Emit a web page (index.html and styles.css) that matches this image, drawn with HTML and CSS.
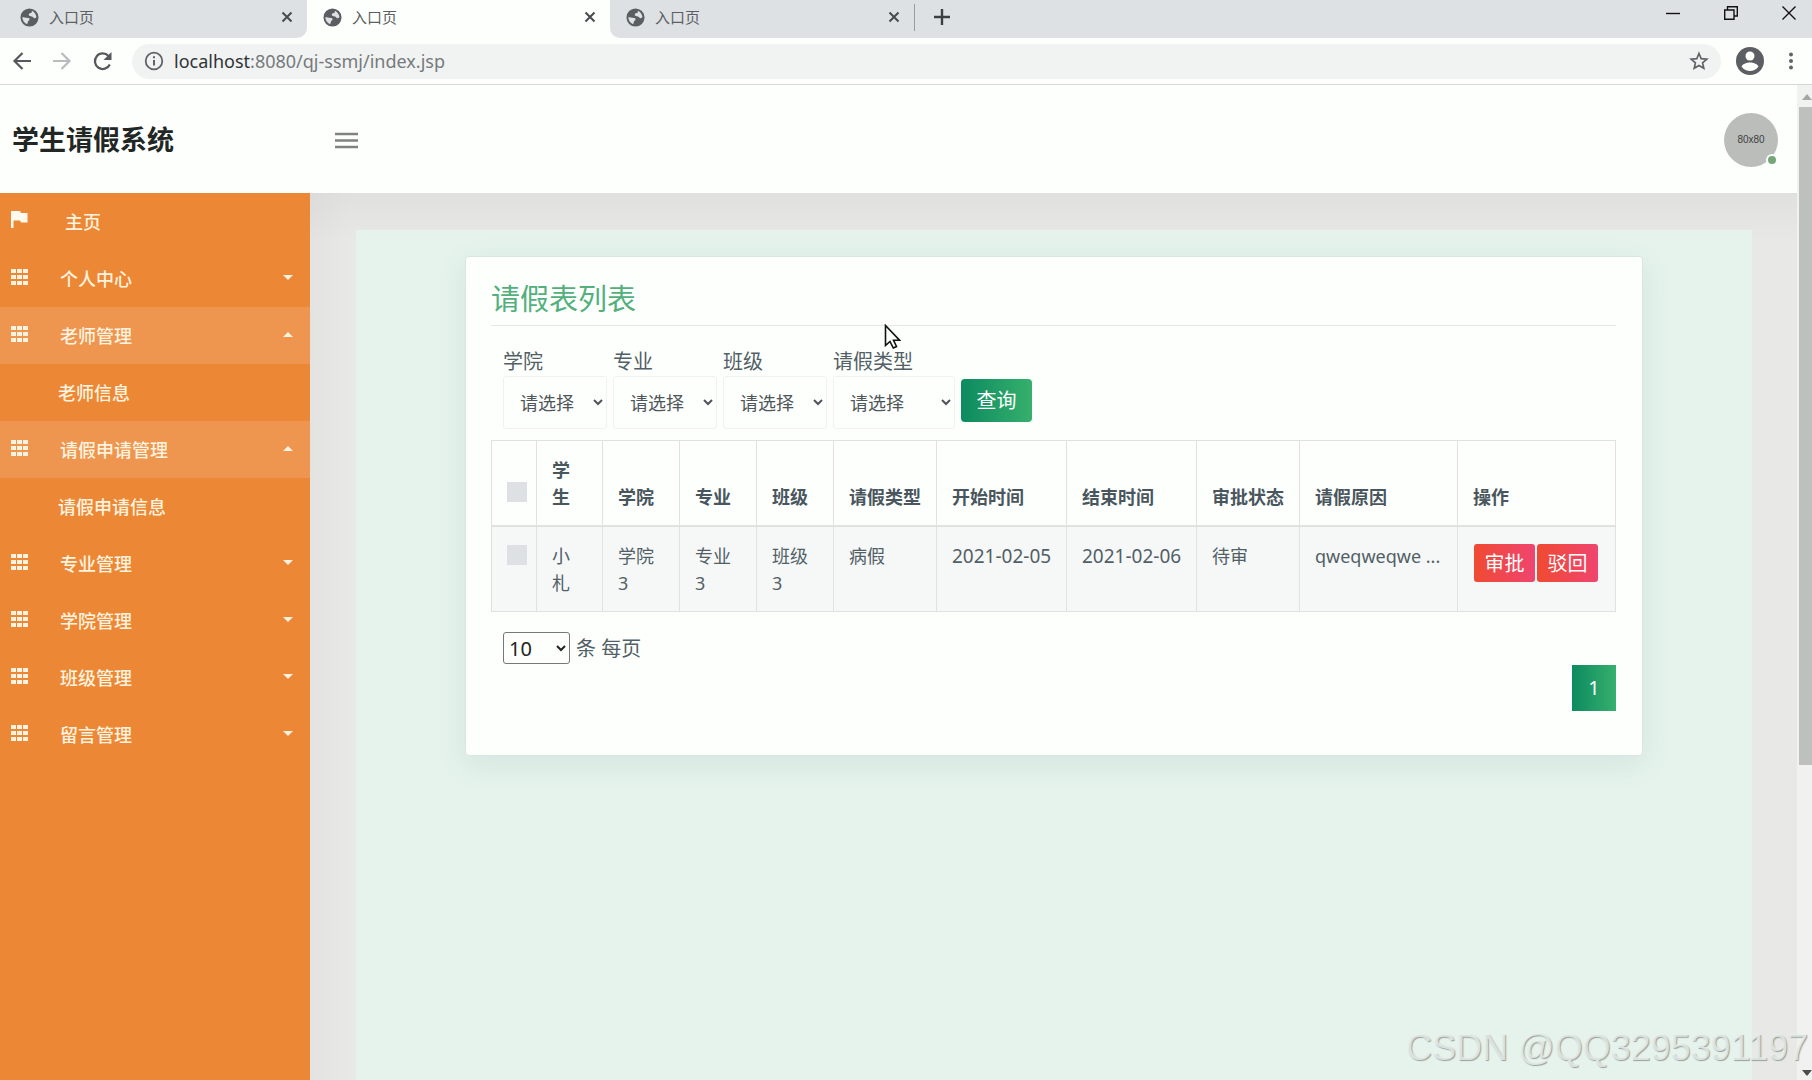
FILE: index.html
```html
<!DOCTYPE html>
<html lang="zh-CN">
<head>
<meta charset="utf-8">
<title>入口页</title>
<link rel="stylesheet" href="styles.css">
</head>
<body>
<svg class="defs" aria-hidden="true">
  <symbol id="globe" viewBox="0 0 20 20"><circle cx="10" cy="10" r="9.500" fill="#5a5e62"/><path d="M2.500 9.500C4 9.500 5.500 10.500 8.500 10.500 10.500 10.500 10.500 12.500 9 13.500 8 14.200 8.500 15.500 7.500 17 4.500 16 2.500 13 2.500 9.500zM12.500 2.800C15 4 17 6.500 17.300 9.500 16 11.500 14.500 11 13.500 9.500 12.500 8.500 10.500 9 9.500 8 8.500 6.500 10 5.500 11.500 5.300 12.500 5 12.500 4 12.500 2.800z" fill="#dee1e4"/></symbol>
  <symbol id="cross" viewBox="0 0 12 12"><path d="M1.500 1.500l9 9M10.500 1.500l-9 9" stroke="#474b4f" stroke-width="2"/></symbol>
  <symbol id="grid" viewBox="0 0 17 16"><path d="M0 0h5v4H0zM6 0h5v4H6zM12 0h5v4h-5zM0 6h5v4H0zM6 6h5v4H6zM12 6h5v4h-5zM0 12h5v4H0zM6 12h5v4H6zM12 12h5v4h-5z" fill="#fff3df"/></symbol>
  <symbol id="down" viewBox="0 0 10 5"><path d="M0 0h10L5 5z" fill="#fff3df"/></symbol>
  <symbol id="up" viewBox="0 0 10 5"><path d="M0 5h10L5 0z" fill="#fff3df"/></symbol>
</svg>

<div class="tabs">
  <div class="tab"><svg class="favicon"><use href="#globe"/></svg><span class="tab-name">入口页</span><button class="tab-close" aria-label="关闭"><svg width="12" height="12"><use href="#cross"/></svg></button></div>
  <div class="tab tab-active"><svg class="favicon"><use href="#globe"/></svg><span class="tab-name">入口页</span><button class="tab-close" aria-label="关闭"><svg width="12" height="12"><use href="#cross"/></svg></button></div>
  <div class="tab tab-last"><svg class="favicon"><use href="#globe"/></svg><span class="tab-name">入口页</span><button class="tab-close" aria-label="关闭"><svg width="12" height="12"><use href="#cross"/></svg></button></div>
  <button class="new-tab" aria-label="新标签页"><svg width="16" height="16" viewBox="0 0 16 16"><path d="M8 0v16M0 8h16" stroke="#3c4043" stroke-width="2.400"/></svg></button>
  <div class="window-buttons">
    <button aria-label="最小化"><svg width="14" height="14" viewBox="0 0 14 14"><path d="M0 7.500h14" stroke="#111" stroke-width="1.400"/></svg></button>
    <button aria-label="还原"><svg width="14" height="14" viewBox="0 0 14 14"><path d="M.7 4h9.300v9.300H.7zM3.500 4V.7h9.800V10H10" fill="none" stroke="#111" stroke-width="1.400"/></svg></button>
    <button aria-label="关闭窗口"><svg width="14" height="14" viewBox="0 0 14 14"><path d="M.5.500l13 13M13.500.500l-13 13" stroke="#111" stroke-width="1.400"/></svg></button>
  </div>
</div>

<div class="toolbar">
  <button aria-label="后退"><svg width="20" height="20" viewBox="0 0 20 20"><path d="M19 10H3M10.500 2L2.500 10l8 8" fill="none" stroke="#55595d" stroke-width="2.200"/></svg></button>
  <button aria-label="前进"><svg width="20" height="20" viewBox="0 0 20 20"><path d="M1 10h16M9.500 2l8 8-8 8" fill="none" stroke="#b9bcbe" stroke-width="2.200"/></svg></button>
  <button aria-label="刷新"><svg width="20" height="20" viewBox="0 0 20 20"><path d="M17.800 13.500A7.800 7.800 0 1 1 16.500 5" fill="none" stroke="#55595d" stroke-width="2.300"/><path d="M19.500 1v8H11.500z" fill="#55595d"/></svg></button>
  <div class="address">
    <svg width="20" height="20" viewBox="0 0 20 20"><circle cx="10" cy="10" r="8.300" fill="none" stroke="#5f6368" stroke-width="1.800"/><path d="M10 9v5.500M10 5.200v2" stroke="#5f6368" stroke-width="2"/></svg>
    <span class="url"><span class="host">localhost</span>:8080/qj-ssmj/index.jsp</span>
    <svg width="20" height="20" viewBox="0 0 24 24"><path d="M12 3l2.600 6.200 6.800.6-5.100 4.400 1.500 6.600-5.800-3.500-5.800 3.500 1.500-6.600L2.600 9.800l6.800-.6z" fill="none" stroke="#5f6368" stroke-width="2"/></svg>
  </div>
  <button class="profile" aria-label="用户"><svg width="28" height="28" viewBox="0 0 28 28"><circle cx="14" cy="14" r="14" fill="#5b5f63"/><circle cx="14" cy="9" r="4.500" fill="#fdfffd"/><path d="M5.500 19.500C7 16.500 11 15.500 14 15.500s7 1 8.500 4C20 23 17 24 14 24s-6-1-8.500-4.500z" fill="#fdfffd"/></svg></button>
  <button class="menu-button" aria-label="菜单"><svg width="6" height="20" viewBox="0 0 6 20"><circle cx="3" cy="3.500" r="2" fill="#5f6368"/><circle cx="3" cy="10" r="2" fill="#5f6368"/><circle cx="3" cy="16.500" r="2" fill="#5f6368"/></svg></button>
</div>

<div class="viewport">
  <div class="page">
    <header class="header">
      <h1 class="brand">学生请假系统</h1>
      <button class="toggle" aria-label="展开菜单"><svg width="23" height="17" viewBox="0 0 23 17"><path d="M0 2h23M0 8.500h23M0 15h23" stroke="#80827f" stroke-width="2.400"/></svg></button>
      <a class="avatar" href="#">80x80<span class="online"></span></a>
    </header>
    <div class="body">
      <nav class="sidebar">
        <a class="item home" href="#"><svg width="17" height="17" viewBox="0 0 17 17"><path d="M0 0h9l1 2h6.500v9.500H10l-1-2H2.500V17H0z" fill="#fff9ee"/></svg><span>主页</span></a>
        <a class="item" href="#"><svg width="17" height="16"><use href="#grid"/></svg><span>个人中心</span><svg class="caret"><use href="#down"/></svg></a>
        <a class="item open" href="#"><svg width="17" height="16"><use href="#grid"/></svg><span>老师管理</span><svg class="caret"><use href="#up"/></svg></a>
        <a class="item sub" href="#">老师信息</a>
        <a class="item open" href="#"><svg width="17" height="16"><use href="#grid"/></svg><span>请假申请管理</span><svg class="caret"><use href="#up"/></svg></a>
        <a class="item sub" href="#">请假申请信息</a>
        <a class="item" href="#"><svg width="17" height="16"><use href="#grid"/></svg><span>专业管理</span><svg class="caret"><use href="#down"/></svg></a>
        <a class="item" href="#"><svg width="17" height="16"><use href="#grid"/></svg><span>学院管理</span><svg class="caret"><use href="#down"/></svg></a>
        <a class="item" href="#"><svg width="17" height="16"><use href="#grid"/></svg><span>班级管理</span><svg class="caret"><use href="#down"/></svg></a>
        <a class="item" href="#"><svg width="17" height="16"><use href="#grid"/></svg><span>留言管理</span><svg class="caret"><use href="#down"/></svg></a>
      </nav>
      <main class="main">
        <div class="panel">
          <section class="card">
            <h2 class="title">请假表列表</h2>
            <form class="filters">
              <label class="field">学院<select><option>请选择</option></select></label>
              <label class="field">专业<select><option>请选择</option></select></label>
              <label class="field">班级<select><option>请选择</option></select></label>
              <label class="field field-wide">请假类型<select><option>请选择</option></select></label>
              <button class="search" type="button">查询</button>
            </form>
            <table class="list">
              <colgroup><col class="c-check"><col class="c-student"><col class="c-short"><col class="c-short"><col class="c-short"><col class="c-type"><col class="c-date"><col class="c-date"><col class="c-type"><col class="c-long"><col class="c-long"></colgroup>
              <thead>
                <tr><th><input type="checkbox" aria-label="全选"></th><th class="student">学生</th><th>学院</th><th>专业</th><th>班级</th><th>请假类型</th><th>开始时间</th><th>结束时间</th><th>审批状态</th><th>请假原因</th><th>操作</th></tr>
              </thead>
              <tbody>
                <tr><td><input type="checkbox" aria-label="选择小札"></td><td class="student">小札</td><td>学院 3</td><td>专业 3</td><td>班级 3</td><td>病假</td><td class="date">2021-02-05</td><td class="date">2021-02-06</td><td>待审</td><td class="reason">qweqweqwe ...</td><td><div class="actions"><button type="button">审批</button><button type="button">驳回</button></div></td></tr>
              </tbody>
            </table>
            <label class="page-size"><select><option>10</option></select> 条 每页</label>
            <div class="pager"><a href="#">1</a></div>
          </section>
        </div>
      </main>
    </div>
  </div>
  <div class="scrollbar">
    <svg width="10" height="6" viewBox="0 0 10 6"><path d="M0 6h10L5 0z" fill="#a5a7a5"/></svg>
    <div class="thumb"></div>
    <svg class="scroll-down" width="10" height="6" viewBox="0 0 10 6"><path d="M0 0h10L5 6z" fill="#4a4d4a"/></svg>
  </div>
</div>

<svg class="pointer" width="17" height="25" viewBox="0 0 17 25"><path d="M1.500 1.500v20l4.500-4 3.300 6.500 3.200-1.500-3-6.300h6z" fill="#fff" stroke="#111" stroke-width="1.600"/></svg>
<div class="watermark">CSDN @QQ3295391197</div>
</body>
</html>
```
FILE: styles.css
```css
* { box-sizing: border-box; }

body {
  margin: 0;
  min-height: 100vh;
  display: flex;
  flex-direction: column;
  position: relative;
  overflow-x: hidden;
  background: #fdfffd;
  color: #525f66;
  font: 18px/27px "Noto Sans", "Noto Sans CJK SC", sans-serif;
}

button, select, input { font: inherit; margin: 0; }
button { border: 0; padding: 0; background: none; color: inherit; }
a { color: inherit; text-decoration: none; }
svg { display: block; flex: none; }
.defs { position: absolute; width: 0; height: 0; }

/* browser tabs */
.tabs { display: flex; height: 38px; background: #fdfffd; }
.tab {
  display: flex;
  align-items: center;
  width: 303px;
  padding: 0 14px 4px 20px;
  background: #dee1e4;
}
.tab:first-child { width: 307px; border-bottom-right-radius: 10px; }
.tab-active { background: #fdfffd; padding-left: 16px; }
.tab-last { width: 304px; padding-left: 16px; border-bottom-left-radius: 10px; }
.favicon { width: 19px; height: 19px; }
.tab-name { flex: 1; margin-left: 10px; font-size: 15px; color: #5b5f62; }
.new-tab {
  display: flex;
  align-items: center;
  flex: 1;
  gap: 19px;
  padding: 0 0 4px;
  background: #dee1e4;
}
.new-tab::before {
  content: "";
  width: 1px;
  height: 27px;
  background: #9a9da0;
}
.window-buttons {
  display: flex;
  gap: 44px;
  padding: 0 16px 12px 0;
  background: #dee1e4;
}

/* browser toolbar */
.toolbar {
  display: flex;
  align-items: center;
  height: 47px;
  padding: 0 18px 0 12px;
  border-bottom: 1px solid #d5d8d6;
}
.toolbar > button { margin-right: 20px; }
.address {
  flex: 1;
  display: flex;
  align-items: center;
  height: 35px;
  padding: 0 12px;
  border-radius: 18px;
  background: #f1f3f2;
}
.url { flex: 1; margin-left: 10px; color: #767a7d; }
.host { color: #303336; }
.toolbar > .profile { margin: 0 24px 0 15px; }
.toolbar > .menu-button { margin: 0; }

/* page frame */
.viewport { flex: 1; display: flex; }
.page { flex: 1; min-width: 0; display: flex; flex-direction: column; }
.header {
  display: flex;
  align-items: center;
  height: 108px;
  padding: 2px 19px 0 12px;
}
.brand { width: 323px; margin: 0; font-size: 27px; line-height: 36px; color: #222624; }
.avatar {
  position: relative;
  width: 54px;
  height: 54px;
  margin-left: auto;
  border-radius: 50%;
  background: #bbbdbb;
  color: #3c403d;
  font: 10px/54px "Liberation Sans", sans-serif;
  text-align: center;
}
.online {
  position: absolute;
  right: 0;
  bottom: 1px;
  width: 12px;
  height: 12px;
  border: 2px solid #fdfffd;
  border-radius: 50%;
  background: #76a678;
}
.body { flex: 1; display: flex; }

/* sidebar */
.sidebar { width: 310px; flex: none; background: #ec8736; color: #fff3df; font-weight: 500; }
.item {
  display: flex;
  align-items: center;
  height: 57px;
  padding: 1px 17px 0 11px;
}
.item > svg:first-child { margin-bottom: 5px; }
.item span { flex: 1; margin-left: 32px; }
.home span { margin-left: 37px; }
.open { background: #ee954f; }
.sub { padding-left: 58px; }
.caret { width: 10px; height: 5px; margin-bottom: 4px; }

/* content */
.main {
  flex: 1;
  min-width: 0;
  display: flex;
  padding: 37px 45px 0 46px;
  background:
    linear-gradient(to bottom, rgba(0, 0, 0, 0.035), transparent 50px),
    linear-gradient(to right, rgba(0, 0, 0, 0.025), transparent 40px),
    #e8e9e7;
}
.panel { flex: 1; min-width: 0; padding: 26px 109px 40px; background: #e5f3ec; }
.card {
  padding: 24px 26px 44px 25px;
  border: 1px solid #dce6e1;
  border-radius: 4px;
  background: #fdfffd;
  box-shadow: 0 8px 30px rgba(60, 110, 110, 0.1);
}
.title {
  margin: 0 0 24px;
  padding-bottom: 8px;
  border-bottom: 1px solid #e5e8e6;
  font-size: 29px;
  line-height: 36px;
  font-weight: 400;
  color: #53b07c;
}
.filters { display: flex; align-items: flex-end; gap: 6px; padding-left: 12px; }
.field { display: flex; flex-direction: column; gap: 2px; width: 104px; font-size: 20px; line-height: 24px; }
.field-wide { width: 122px; }
.field select {
  height: 53px;
  padding: 0 4px 0 12px;
  border: 1px solid #eff2f0;
  border-radius: 3px;
  background-color: #fdfffd;
  color: #50555a;
  font-size: 18px;
}
.search {
  width: 71px;
  height: 43px;
  margin-bottom: 7px;
  border-radius: 4px;
  background: linear-gradient(to right, #0d8a60, #36b06d);
  color: #fff;
  font-size: 20px;
}

/* table */
.list { width: 100%; margin-top: 11px; table-layout: fixed; border-collapse: collapse; }
.c-check { width: 45px; }
.c-student { width: 66px; }
.c-short { width: 77px; }
.c-type { width: 103px; }
.c-date { width: 130px; }
.c-long { width: 158px; }
.list th, .list td {
  padding: 16px 14px 15px 15px;
  border: 1px solid #dfe2e1;
  text-align: left;
}
.list th { vertical-align: bottom; font-weight: 700; color: #4a565d; border-bottom-width: 2px; padding-bottom: 14px; }
.list td { vertical-align: top; background: #f6f8f8; padding-bottom: 14px; }
.list .student { padding-right: 20px; }
.list .date { font-size: 19px; white-space: nowrap; padding-right: 0; }
.list .reason { white-space: nowrap; padding-right: 0; }
.list input {
  appearance: none;
  display: block;
  width: 20px;
  height: 20px;
  margin: 2px 0 0;
  background: #dee1e3;
}
.list th input { margin-bottom: 9px; }
.list td:first-child, .list th:first-child { padding-right: 0; }
.list td:last-child { padding-right: 0; }
.actions { display: flex; gap: 2px; padding: 1px; }
.actions button {
  width: 61px;
  height: 38px;
  border-radius: 3px;
  background: linear-gradient(to right, #f04a32, #ef4570);
  color: #fff;
  font-size: 20px;
}

/* paging */
.page-size { display: flex; align-items: center; gap: 6px; margin: 20px 0 1px 12px; font-size: 20px; }
.page-size select {
  width: 67px;
  height: 32px;
  padding: 0 3px 0 1px;
  border: 1px solid #767876;
  border-radius: 3px;
  background-color: #fdfffd;
  color: #222;
}
.pager { display: flex; justify-content: flex-end; }
.pager a {
  width: 44px;
  height: 46px;
  background: linear-gradient(to right, #0d8a60, #36b06d);
  color: #fff;
  font-size: 20px;
  line-height: 46px;
  text-align: center;
}

/* scrollbar */
.scrollbar {
  display: flex;
  flex-direction: column;
  width: 15px;
  padding: 9px 0 4px 2px;
  background: #f0f1f0;
}
.scrollbar svg { align-self: flex-end; }
.thumb { height: 67%; margin-top: 7px; background: #bec0be; }
.scroll-down { margin-top: auto; }

.pointer { position: absolute; left: 884px; top: 324px; }
.watermark {
  position: absolute;
  right: 4px;
  bottom: 12px;
  color: rgba(236, 242, 239, 0.8);
  font: 36px/40px "Liberation Sans", sans-serif;
  text-shadow: 1px 1px 1px #9ba19d;
}
```
